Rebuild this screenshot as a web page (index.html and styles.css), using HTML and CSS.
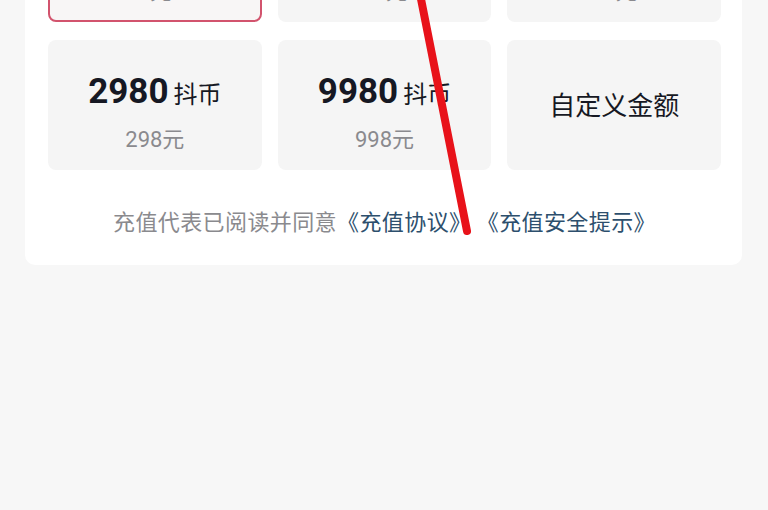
FILE: index.html
```html
<!DOCTYPE html>
<html lang="zh-CN">
<head>
<meta charset="utf-8">
<title>充值</title>
<link rel="stylesheet" href="styles.css">
</head>
<body>
<div class="card">
  <div class="grid">
    <div class="tile selected">
      <div class="amount"><span class="num">60</span><span class="unit">抖币</span></div>
      <div class="price">6元</div>
    </div>
    <div class="tile">
      <div class="amount"><span class="num">300</span><span class="unit">抖币</span></div>
      <div class="price">30元</div>
    </div>
    <div class="tile">
      <div class="amount"><span class="num">980</span><span class="unit">抖币</span></div>
      <div class="price">98元</div>
    </div>
    <div class="tile">
      <div class="amount"><span class="num">2980</span><span class="unit">抖币</span></div>
      <div class="price">298元</div>
    </div>
    <div class="tile">
      <div class="amount"><span class="num">9980</span><span class="unit">抖币</span></div>
      <div class="price">998元</div>
    </div>
    <div class="tile custom">
      <div class="custom-label">自定义金额</div>
    </div>
  </div>
  <p class="note">充值代表已阅读并同意<a class="link">《充值协议》</a> <a class="link">《充值安全提示》</a></p>
</div>
<svg class="annotation" width="768" height="510" viewBox="0 0 768 510">
  <line x1="420" y1="-6" x2="467" y2="231" stroke="#e8121a" stroke-width="8" stroke-linecap="round"/>
</svg>
</body>
</html>
```

FILE: styles.css
```css
html, body {
  margin: 0;
  padding: 0;
}
body {
  background: #f7f7f7;
  width: 768px;
  height: 510px;
  overflow: hidden;
  position: relative;
  font-family: "Noto Sans CJK SC", "Noto Sans", sans-serif;
}
.card {
  background: #ffffff;
  margin: -124px 26px 0 25px;
  padding: 16px 21px 31px 23px;
  border-radius: 10px;
}
.grid {
  display: grid;
  grid-template-columns: repeat(3, 1fr);
  column-gap: 16px;
  row-gap: 18px;
}
.tile {
  box-sizing: border-box;
  height: 130px;
  background: #f5f5f5;
  border-radius: 8px;
  display: flex;
  flex-direction: column;
  align-items: center;
  padding-top: 31px;
}
.tile.selected {
  border: 2px solid #d2536d;
  background: #f8f6f6;
  padding-top: 29px;
}
.amount {
  height: 42px;
  line-height: 42px;
  display: flex;
  align-items: baseline;
  color: #161823;
}
.num {
  font-family: "Roboto", "Noto Sans", sans-serif;
  font-weight: 700;
  font-size: 35px;
}
.unit {
  font-size: 24px;
  font-weight: 400;
  margin-left: 5px;
}
.price {
  margin-top: 13px;
  line-height: 28px;
  font-size: 22px;
  color: #8a8a8e;
  font-family: "Roboto", "Noto Sans CJK SC", sans-serif;
}
.tile.custom {
  padding-top: 0;
  justify-content: center;
}
.custom-label {
  font-size: 26px;
  font-weight: 400;
  color: #161823;
  margin-top: -3px;
}
.note {
  margin: 36px 0 0 0;
  text-align: center;
  font-size: 22px;
  line-height: 28px;
  letter-spacing: 0.4px;
  color: #8a8a8e;
  white-space: nowrap;
}
.link {
  color: #2d4f6d;
}
.annotation {
  position: absolute;
  left: 0;
  top: 0;
  pointer-events: none;
}
```
